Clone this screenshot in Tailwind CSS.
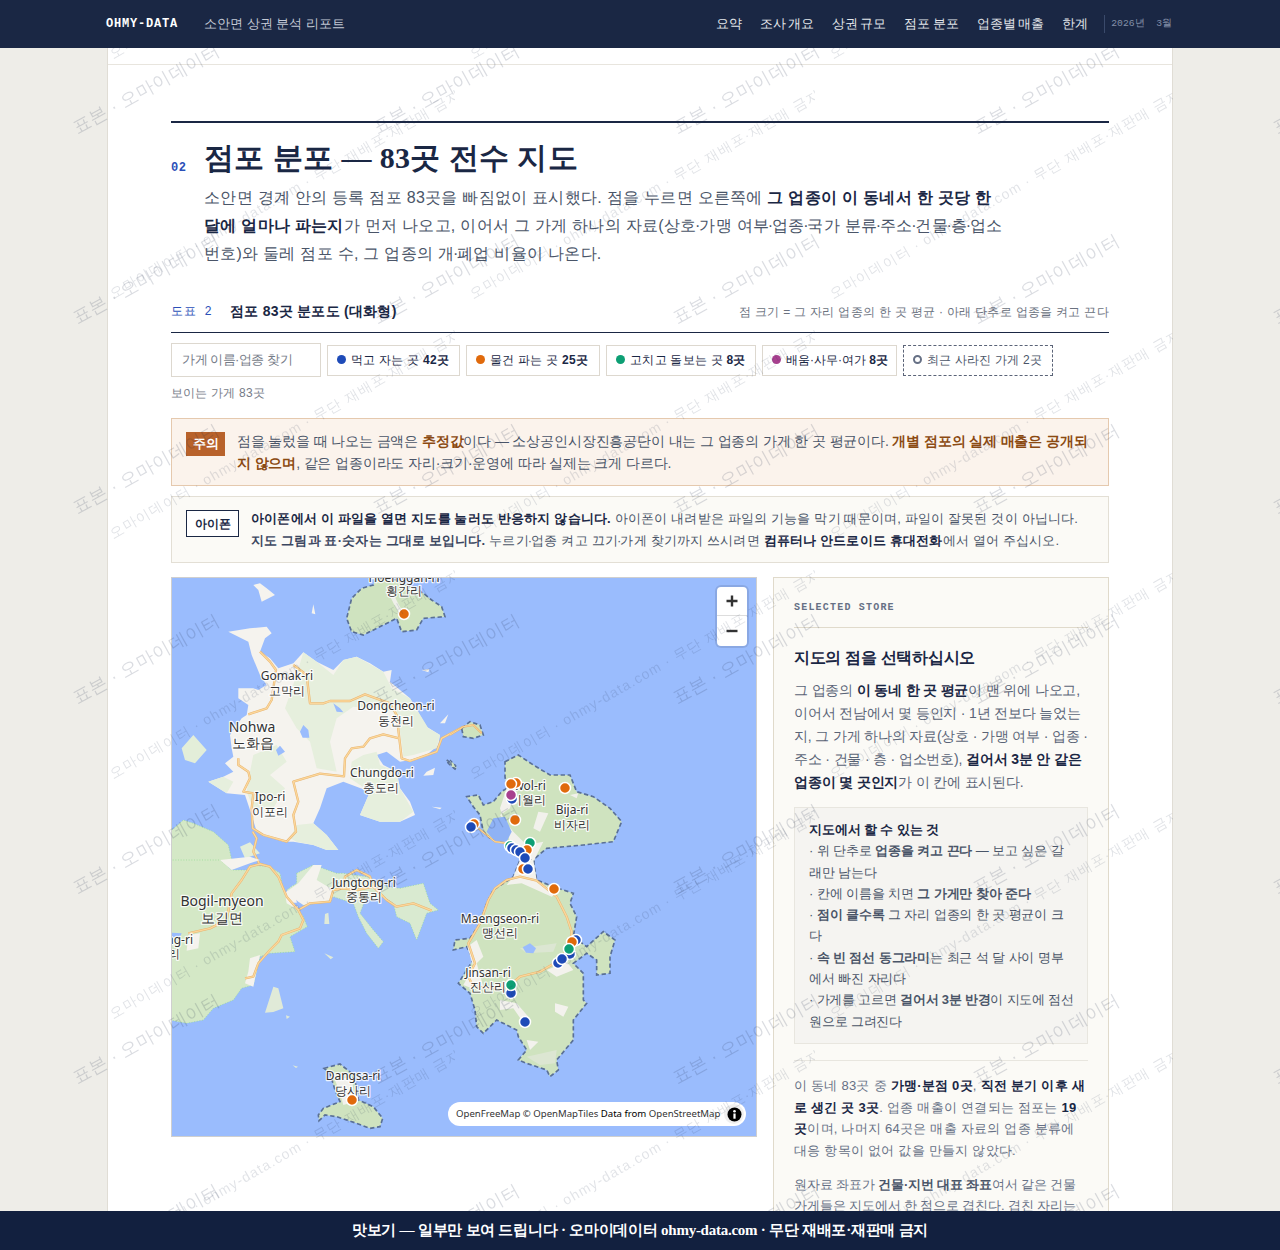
<!DOCTYPE html>
<html lang="ko">
<head>
<meta charset="UTF-8">
<title>소안면 상권 분석 리포트</title>
<script src="https://cdn.jsdelivr.net/npm/@tailwindcss/browser@4"></script>
</head>
<body class="bg-[#eeede8] text-[#1a2744] font-['Liberation_Sans',sans-serif]">
<div class="h-[1250px] overflow-hidden">

  <!-- Header -->
  <header class="relative z-20 h-12 bg-[#1a2744]">
    <div class="mx-auto w-[1068px] h-full flex items-center">
      <span class="w-[98px] font-['Liberation_Mono',monospace] font-bold text-[12px] tracking-[0.8px] text-white">OHMY-DATA</span>
      <span class="text-[13px] text-[#c4cad6]">소안면 상권 분석 리포트</span>
      <nav class="ml-auto flex items-center gap-[18px] text-[13px] [word-spacing:-1.2px] text-[#e4e7ec]">
        <span>요약</span><span>조사 개요</span><span>상권 규모</span><span>점포 분포</span><span>업종별 매출</span><span>한계</span>
      </nav>
      <span class="ml-[16px] mr-[2px] pl-[6px] border-l border-[#3a4a6b] font-['Liberation_Mono',monospace] text-[9.7px] leading-[18px] text-[#8490a8] whitespace-pre">2026년  3월</span>
    </div>
  </header>

  <!-- Main -->
  <main class="mx-auto w-[1066px] min-h-[1202px] bg-white border-x border-[#e0ddd5]">
    <div class="h-[17px] border-b border-[#e8e5de]"></div>
    <section class="px-[63px] pt-[56px]">
      <div class="border-t-2 border-[#1a2744] flex pt-[13px]">
        <span class="w-[33px] pt-[23px] font-['Liberation_Mono',monospace] font-bold text-[12px] tracking-[0.5px] text-[#2b4fb8]">02</span>
        <div>
          <h2 class="font-['Liberation_Serif',serif] font-bold text-[30px] leading-[44px] tracking-[0.4px]">점포 분포 — 83곳 전수 지도</h2>
          <p class="mt-[4px] w-[802px] text-[16px] tracking-[0.28px] leading-[28px] text-[#4a5568]">소안면 경계 안의 등록 점포 83곳을 빠짐없이 표시했다. 점을 누르면 오른쪽에 <b class="text-[#1a2744]">그 업종이 이 동네서 한 곳당 한 달에 얼마나 파는지</b>가 먼저 나오고, 이어서 그 가게 하나의 자료(상호<i class="not-italic mx-[-1.4px]">·</i>가맹 여부<i class="not-italic mx-[-1.4px]">·</i>업종<i class="not-italic mx-[-1.4px]">·</i>국가 분류<i class="not-italic mx-[-1.4px]">·</i>주소<i class="not-italic mx-[-1.4px]">·</i>건물<i class="not-italic mx-[-1.4px]">·</i>층<i class="not-italic mx-[-1.4px]">·</i>업소번호)와 둘레 점포 수, 그 업종의 개<i class="not-italic mx-[-1.4px]">·</i>폐업 비율이 나온다.</p>
        </div>
      </div>

      <!-- Figure heading -->
      <div class="mt-[29px] h-[36px] flex items-center border-b border-[#1a2744] pb-[6px]">
        <span class="w-[59px] font-['Liberation_Mono',monospace] text-[12px] tracking-[0.8px] text-[#2b4fb8] whitespace-pre">도표 2</span>
        <b class="text-[14px] tracking-[0.25px]">점포 83곳 분포도 (대화형)</b>
        <span class="ml-auto text-[12px] tracking-[0.3px] text-[#6b7280]">점 크기 = 그 자리 업종의 한 곳 평균 · 아래 단추로 업종을 켜고 끈다</span>
      </div>

      <!-- Filters -->
      <div class="mt-[10px] flex items-center gap-[6px]">
        <div class="w-[150px] h-[34px] border border-[#ddd8cf] px-[10px] flex items-center text-[13px] tracking-[-0.5px] text-[#757b87]">가게 이름·업종 찾기</div>
        <div class="w-[133px] h-[31px] border border-[#ddd8cf] flex items-center pl-[9px] pb-[1px] gap-[5px] text-[12px] tracking-[0.25px]"><i class="w-[9px] h-[9px] rounded-full bg-[#1e4bb8]"></i><span>먹고 자는 곳 <b>42곳</b></span></div>
        <div class="w-[134px] h-[31px] border border-[#ddd8cf] flex items-center pl-[9px] pb-[1px] gap-[5px] text-[12px] tracking-[0.25px]"><i class="w-[9px] h-[9px] rounded-full bg-[#e06a0c]"></i><span>물건 파는 곳 <b>25곳</b></span></div>
        <div class="w-[150px] h-[31px] border border-[#ddd8cf] flex items-center pl-[9px] pb-[1px] gap-[5px] text-[12px] tracking-[0.25px]"><i class="w-[9px] h-[9px] rounded-full bg-[#0d9f74]"></i><span>고치고 돌보는 곳 <b>8곳</b></span></div>
        <div class="w-[135px] h-[31px] border border-[#ddd8cf] flex items-center pl-[9px] pb-[1px] gap-[5px] text-[12px]"><i class="w-[9px] h-[9px] rounded-full bg-[#a8408f]"></i><span>배움·사무·여가 <b>8곳</b></span></div>
        <div class="w-[150px] h-[31px] border border-dashed border-[#5b6478] flex items-center pl-[9px] pb-[1px] gap-[5px] text-[12px] tracking-[0.2px] text-[#4a5568]"><i class="w-[9px] h-[9px] rounded-full border-2 border-[#667085]"></i><span>최근 사라진 가게 2곳</span></div>
      </div>
      <p class="mt-[8px] text-[12px] tracking-[0.2px] leading-[17px] text-[#757b87]">보이는 가게 83곳</p>

      <!-- Notices -->
      <div class="mt-[16px] h-[68px] bg-[#fbf3ec] border border-[#e5c9ae] flex pl-[14px] pt-[11px] gap-[12px]">
        <span class="shrink-0 w-[39px] h-[24px] mt-[2px] bg-[#b8622b] text-white font-bold text-[13px] flex items-center justify-center">주의</span>
        <p class="text-[14px] tracking-[-0.15px] leading-[22px] text-[#4a5568] pr-[20px]">점을 눌렀을 때 나오는 금액은 <b class="text-[#8b4a12]">추정값</b>이다 — 소상공인시장진흥공단이 내는 그 업종의 가게 한 곳 평균이다. <b class="text-[#8b4a12]">개별 점포의 실제 매출은 공개되지 않으며</b>, 같은 업종이라도 자리·크기·운영에 따라 실제는 크게 다르다.</p>
      </div>
      <div class="mt-[10px] h-[67px] bg-[#fbfaf6] border border-[#e3dfd5] flex pl-[14px] pt-[11px] gap-[12px]">
        <span class="shrink-0 w-[53px] h-[27px] mt-[2px] bg-white border border-[#1a2744] font-bold text-[12px] flex items-center justify-center">아이폰</span>
        <p class="text-[13px] tracking-[0.18px] leading-[22px] text-[#4a5568] pr-[20px]"><b class="text-[#1a2744]">아이폰에서 이 파일을 열면 지도를 눌러도 반응하지 않습니다.</b> 아이폰이 내려받은 파일의 기능을 막기 때문이며, 파일이 잘못된 것이 아닙니다. <b class="text-[#3b4660]">지도 그림과 표·숫자는 그대로 보입니다.</b> 누르기<i class="not-italic mx-[-1px]">·</i>업종 켜고 끄기<i class="not-italic mx-[-1px]">·</i>가게 찾기까지 쓰시려면 <b class="text-[#1a2744]">컴퓨터나 안드로이드 휴대전화</b>에서 열어 주십시오.</p>
      </div>

      <!-- Map and side panel -->
      <div class="mt-[14px] flex gap-[16px] items-start">
        <div class="relative w-[586px] h-[560px] border border-[#cfcfcf] bg-[#9abcfd] overflow-hidden shrink-0">
          <svg class="block" width="584" height="558" viewBox="172 578 584 558" font-family="'Noto Sans',sans-serif">
            <!-- north half, traced on a 3x grid -->
            <g transform="translate(170,575) scale(0.33333)">
              <path fill="#f5f3ee" d="M175 170 240 160 290 155 305 175 285 190 270 230 300 250 325 280 370 265 400 232 440 260 490 285 520 255 560 245 600 265 640 290 665 285 660 320 690 345 720 370 770 455 810 480 805 510 770 540 720 555 690 560 650 530 620 540 640 570 680 590 690 640 720 680 735 720 690 740 630 740 570 720 600 650 520 620 470 640 450 700 430 745 470 780 505 825 470 825 430 810 370 800 340 800 260 770 245 720 225 660 170 655 115 620 160 605 190 590 165 565 190 545 185 520 180 480 215 430 230 420 235 390 205 370 205 340 250 340 265 345 290 330 270 300 245 240 235 200Z"/>
              <path fill="#e6efdd" d="M400 232 440 260 490 300 520 255 560 245 640 290 665 340 720 370 775 460 810 480 800 520 730 540 700 545 690 470 670 410 600 400 550 395 500 430 480 500 500 590 440 580 420 500 380 460 345 400 380 300Z"/>
              <path fill="#e6efdd" d="M250 540 320 510 350 560 300 600 345 640 310 700 250 700 230 650 240 590Z"/>
              <path fill="#e6efdd" d="M580 540 620 530 630 570 680 590 690 640 730 710 690 740 630 740 570 720 600 650 540 610 545 560Z"/>
              <path fill="#e6efdd" d="M380 750 430 745 470 780 505 825 470 825 430 810 380 800 360 790Z"/>
              <path fill="#e6efdd" d="M115 620 160 605 190 620 170 655Z"/>
              <path fill="#9abcfd" d="M400 450 415 465 418 488 398 488 390 470ZM330 512 345 530 325 542 318 525ZM490 385 510 400 520 412 500 410Z"/>
              <path fill="#f5f3ee" d="M250 30 270 25 290 40 315 60 275 80 265 45ZM430 88 436 118 425 115ZM770 590 795 578 790 600 760 602ZM785 695 815 698 810 703ZM755 285 778 282 775 292ZM810 445 835 418 825 445Z"/>
              <path fill="#e3eed9" d="M35 520 70 480 110 525 75 565 45 555ZM210 815 240 802 270 835 225 850Z"/>
              <path fill="none" stroke="#e9b56f" stroke-width="7" stroke-linejoin="round" d="M270 230 300 260 318 285 305 375 290 400 235 418M370 270 410 300 420 385 460 385 480 378 540 378 585 358 660 385 680 420 688 490 695 550 720 558 800 530 815 490 880 455M688 490 640 478 600 490 580 515 545 520 525 550 522 604 450 596 370 620 385 680 370 720 378 770 350 800 280 780 248 760 245 700 250 655 220 650 240 610 235 590 205 570 205 550M248 770 260 790 250 830 270 870"/>
              <path fill="none" stroke="#fbd79c" stroke-width="4" stroke-linejoin="round" d="M270 230 300 260 318 285 305 375 290 400 235 418M370 270 410 300 420 385 460 385 480 378 540 378 585 358 660 385 680 420 688 490 695 550 720 558 800 530 815 490 880 455M688 490 640 478 600 490 580 515 545 520 525 550 522 604 450 596 370 620 385 680 370 720 378 770 350 800 280 780 248 760 245 700 250 655 220 650 240 610 235 590 205 570 205 550M248 770 260 790 250 830 270 870"/>
              <path fill="#cfe3bf" stroke="#5a7096" stroke-width="5" stroke-dasharray="13 8" d="M620 10 610 30 575 40 545 70 530 130 545 170 580 180 640 150 680 130 695 170 740 165 760 130 825 125 815 95 785 75 760 55 720 35 680 15 640 10Z"/>
              <path fill="none" stroke="#eff0ea" stroke-width="12" d="M655 40 680 90 700 125"/>
              <path fill="#cfe3bf" stroke="#5a7096" stroke-width="5" stroke-dasharray="13 8" d="M830 555 860 575 855 582 835 565Z"/>
              <path fill="#d4e8c6" stroke="#8fdc8f" stroke-width="2" stroke-dasharray="3 5" d="M0 770 40 735 70 745 130 770 175 810 190 875 0 875Z"/>
            </g>
            <!-- east islands -->
            <g transform="translate(450,575) scale(0.33333)">
              <path fill="#cfe3bf" stroke="#5a7096" stroke-width="5" stroke-dasharray="13 8" d="M165 560 205 540 250 570 300 600 360 600 380 650 430 665 480 700 515 740 490 800 400 810 290 820 255 850 245 880 210 880 215 840 190 810 150 800 120 790 100 770 90 720 70 695 50 665 85 660 100 690 130 680 155 650 170 640 165 605Z"/>
              <path fill="#f2f1ec" d="M170 640 190 660 180 700 150 720 190 770 230 810 280 800 255 850 245 880 210 880 215 840 180 800 150 700Z"/>
              <path fill="#f2f1ec" d="M265 710 295 715 270 770 250 760ZM360 660 385 655 380 670Z"/>
              <path fill="#8fb2f5" d="M130 730 165 725 185 770 170 800 135 800 110 770Z"/>
              <path fill="#cfe3bf" stroke="#5a7096" stroke-width="5" stroke-dasharray="13 8" d="M35 460 60 440 90 450 100 480 70 490 40 485Z"/>
              <path fill="none" stroke="#e9b56f" stroke-width="6" d="M0 480 40 455 70 450 95 475M85 760 135 800 170 805"/>
              <path fill="none" stroke="#fbd79c" stroke-width="3" d="M0 480 40 455 70 450 95 475M85 760 135 800 170 805"/>
              <path fill="#cfe3bf" stroke="#5a7096" stroke-width="4" stroke-dasharray="10 8" d="M0 555 15 570 20 582 5 575Z"/>
            </g>
            <!-- Bogil, Jungtong, Dangsa -->
            <g transform="translate(170,860) scale(0.33333)">
              <path fill="#d4e8c6" stroke="#8fdc8f" stroke-width="2" stroke-dasharray="3 5" d="M0 0 150 0 185 30 230 30 240 15 300 20 330 40 340 90 370 130 400 170 412 200 360 230 375 275 300 280 270 290 250 375 215 385 190 420 130 445 100 480 50 490 0 480Z"/>
              <path fill="#f5f3ee" d="M150 0 185 30 240 10 270 0 240 -10ZM345 100 370 75 385 150 350 130ZM240 295 270 285 250 380 225 370 235 335ZM55 225 90 220 85 265 50 272Z"/>
              <path fill="#9abcfd" d="M0 218 35 220 30 232 0 232ZM368 128 388 128 380 142Z"/>
              <path fill="#d9ead0" stroke="#8fdc8f" stroke-width="2" stroke-dasharray="3 5" d="M380 40 430 15 500 40 520 40 590 50 650 80 690 85 760 70 780 130 805 150 770 160 740 240 720 190 680 170 670 130 640 110 585 120 570 160 610 210 640 245 625 265 590 220 565 170 550 130 490 110 470 125 400 135 385 120 350 90 380 70Z"/>
              <path fill="#f5f3ee" d="M350 95 385 70 430 15 455 15 440 60 490 90 485 120 400 135 385 125Z"/>
              <path fill="none" stroke="#e9b56f" stroke-width="7" stroke-linejoin="round" d="M225 355 250 350 265 310 300 270 325 245 335 225 390 205 400 180 385 150 350 110 325 50 300 20 270 12 240 20 215 60 185 100 170 180 120 205 55 220M385 150 420 130 480 125 490 90 520 85 560 90 610 80 650 120 680 140 730 130 785 152M520 85 525 50 560 30 600 50 610 80"/>
              <path fill="none" stroke="#fbd79c" stroke-width="4" stroke-linejoin="round" d="M225 355 250 350 265 310 300 270 325 245 335 225 390 205 400 180 385 150 350 110 325 50 300 20 270 12 240 20 215 60 185 100 170 180 120 205 55 220M385 150 420 130 480 125 490 90 520 85 560 90 610 80 650 120 680 140 730 130 785 152M520 85 525 50 560 30 600 50 610 80"/>
              <path fill="#e0ead8" d="M285 458 310 380 325 385 340 445 310 456ZM465 162 475 158 478 192 463 192ZM463 280 490 292 482 298ZM348 466 360 470 350 477ZM490 382 500 388ZM368 616 384 620 378 624Z"/>
              <path fill="#cfe3bf" stroke="#5a7096" stroke-width="5" stroke-dasharray="13 8" d="M462 625 510 612 545 640 560 680 565 720 610 740 638 775 630 800 600 805 560 790 500 770 465 765 447 782 445 765 460 745 510 725 495 690 480 640Z"/>
              <path fill="#f2f1ec" d="M495 660 545 650 555 725 520 735 510 700Z"/>
            </g>
            <!-- Maengseon -->
            <g transform="translate(440,860) scale(0.33333)">
              <path fill="#cfe3bf" stroke="#5a7096" stroke-width="5" stroke-dasharray="13 8" d="M240 0 280 0 290 60 340 80 400 100 390 130 410 170 400 230 440 260 490 215 525 240 510 290 510 340 470 345 470 300 440 280 400 310 430 340 430 420 440 430 400 480 400 540 350 600 355 630 330 650 320 630 260 610 235 600 260 570 235 530 230 510 170 480 130 520 110 500 105 450 90 400 55 370 80 330 100 300 80 260 40 270 45 240 90 235 120 190 140 130 160 90 220 50Z"/>
              <path fill="#f3f2ed" d="M240 0 280 0 290 60 350 100 335 110 290 90 245 70 200 75 220 50ZM345 430 385 440 370 470 345 455ZM180 420 230 430 265 470 255 495 220 445 180 450ZM320 330 380 305 400 330 350 350ZM260 540 295 545 270 570Z"/>
              <path fill="#dce6d2" d="M260 590 350 570 345 610 300 615ZM240 265 350 250 340 275 260 280Z"/>
              <path fill="#f3f2ed" d="M82 260 110 240 130 290 110 310 130 380 95 385 70 375 100 320Z"/>
              <path fill="#9abcfd" d="M248 262 270 250 288 265 280 280 258 278Z"/>
              <path fill="none" stroke="#e9b56f" stroke-width="7" stroke-linejoin="round" d="M145 120 165 85 200 60 240 50 290 62 350 110 380 170 395 215 390 250 360 300 300 335 240 350 215 372 170 385 100 380 85 350 105 310 85 250 120 190 145 120"/>
              <path fill="none" stroke="#fbd79c" stroke-width="4" stroke-linejoin="round" d="M145 120 165 85 200 60 240 50 290 62 350 110 380 170 395 215 390 250 360 300 300 335 240 350 215 372 170 385 100 380 85 350 105 310 85 250 120 190 145 120"/>
            </g>
            <!-- place names -->
            <g fill="#333" stroke="#fff" stroke-opacity="0.85" stroke-width="2.5" paint-order="stroke" stroke-linejoin="round" text-anchor="middle" font-size="12">
              <text x="404" y="582">Hoenggan-ri</text><text x="404" y="595">횡간리</text>
              <text x="287" y="680">Gomak-ri</text><text x="287" y="695">고막리</text>
              <text x="396" y="710">Dongcheon-ri</text><text x="396" y="725">동천리</text>
              <text x="382" y="777">Chungdo-ri</text><text x="381" y="792">충도리</text>
              <text x="270" y="801">Ipo-ri</text><text x="270" y="816">이포리</text>
              <text x="528" y="790">Iwol-ri</text><text x="528" y="804">이월리</text>
              <text x="572" y="814">Bija-ri</text><text x="572" y="829">비자리</text>
              <text x="364" y="887">Jungtong-ri</text><text x="364" y="901">중통리</text>
              <text x="500" y="923">Maengseon-ri</text><text x="500" y="937">맹선리</text>
              <text x="488" y="977">Jinsan-ri</text><text x="488" y="991">진산리</text>
              <text x="353" y="1080">Dangsa-ri</text><text x="353" y="1095">당사리</text>
              <text x="193" y="944" text-anchor="end">Bureong-ri</text><text x="180" y="958" text-anchor="end">부황리</text>
              <text x="252" y="732" font-size="14">Nohwa</text><text x="253" y="748" font-size="14">노화읍</text>
              <text x="222" y="906" font-size="14">Bogil-myeon</text><text x="222" y="923" font-size="14">보길면</text>
            </g>
            <!-- store dots -->
            <g stroke="#fff" stroke-width="1.5">
              <circle cx="404" cy="614" r="5.5" fill="#e06a0c"/>
              <circle cx="516" cy="783" r="5.5" fill="#e06a0c"/><circle cx="511" cy="784" r="5.5" fill="#e06a0c"/>
              <circle cx="565" cy="788" r="5.5" fill="#e06a0c"/>
              <circle cx="512" cy="799" r="5.5" fill="#1e4bb8"/><circle cx="511" cy="795" r="5.5" fill="#a8408f"/>
              <circle cx="515" cy="820" r="5.5" fill="#e06a0c"/>
              <circle cx="474" cy="824" r="5.5" fill="#e06a0c"/><circle cx="471" cy="827" r="5.5" fill="#1e4bb8"/>
              <circle cx="530" cy="843" r="5.5" fill="#0d9f74"/><circle cx="510" cy="846" r="5.5" fill="#0d9f74"/>
              <circle cx="527" cy="850" r="5.5" fill="#e06a0c"/>
              <circle cx="512" cy="848" r="5.5" fill="#1e4bb8"/><circle cx="516" cy="850" r="5.5" fill="#1e4bb8"/><circle cx="520" cy="852" r="5.5" fill="#1e4bb8"/>
              <circle cx="525" cy="858" r="5.5" fill="#1e4bb8"/>
              <circle cx="523" cy="869" r="5.5" fill="#e06a0c"/><circle cx="528" cy="869" r="5.5" fill="#1e4bb8"/>
              <circle cx="554" cy="889" r="5.5" fill="#e06a0c"/>
              <circle cx="576" cy="940" r="5.5" fill="#1e4bb8"/><circle cx="572" cy="942" r="5.5" fill="#e06a0c"/>
              <circle cx="570" cy="954" r="5.5" fill="#1e4bb8"/><circle cx="569" cy="949" r="5.5" fill="#0d9f74"/>
              <circle cx="558" cy="963" r="5.5" fill="#1e4bb8"/><circle cx="562" cy="959" r="5.5" fill="#1e4bb8"/>
              <circle cx="511" cy="993" r="5.5" fill="#1e4bb8"/><circle cx="511" cy="985" r="5.5" fill="#0d9f74"/>
              <circle cx="525" cy="1022" r="5.5" fill="#1e4bb8"/>
              <circle cx="352" cy="1100" r="5.5" fill="#e06a0c"/>
            </g>
          </svg>
          <!-- zoom control -->
          <div class="absolute right-[9px] top-[9px] w-[30px] h-[59px] rounded-[4px] bg-white shadow-[0_0_0_2px_rgba(0,0,0,0.1)] flex flex-col">
            <div class="h-[29px] border-b border-[#ddd] flex items-center justify-center">
              <svg width="12" height="12" viewBox="0 0 12 12"><path d="M6 0.5v11M0.5 6h11" stroke="#333" stroke-width="2.4"/></svg>
            </div>
            <div class="flex-1 flex items-center justify-center">
              <svg width="12" height="12" viewBox="0 0 12 12"><path d="M0.5 6h11" stroke="#333" stroke-width="2.4"/></svg>
            </div>
          </div>
          <!-- attribution -->
          <div class="absolute right-[10px] bottom-[10px] w-[298px] h-[24px] rounded-full bg-white flex items-center pl-[8px] font-['Noto_Sans','Liberation_Sans',sans-serif] text-[9.6px] text-[#333] whitespace-pre">
            <span>OpenFreeMap © OpenMapTiles <span class="text-black">Data from</span> OpenStreetMap</span>
            <span class="absolute right-[2px] top-[2px] w-[20px] h-[20px] rounded-full bg-[#f0f0f0] flex items-center justify-center">
              <svg width="15" height="15" viewBox="0 0 15 15"><circle cx="7.5" cy="7.5" r="7" fill="#000"/><rect x="6.4" y="6.5" width="2.2" height="5.2" fill="#fff"/><circle cx="7.5" cy="4.2" r="1.3" fill="#fff"/></svg>
            </span>
          </div>
        </div>

        <!-- Selected store panel -->
        <aside class="w-[336px] h-[700px] bg-[#fbfaf6] border border-[#e0dacb] px-[20px] pt-[23px]">
          <div class="pb-[13px] border-b border-[#e0dacb] font-['Liberation_Mono',monospace] font-bold text-[10px] leading-[13px] tracking-[1.2px] text-[#667085]">SELECTED STORE</div>
          <h3 class="mt-[18px] font-bold text-[16px] tracking-[-0.3px] leading-[24px]">지도의 점을 선택하십시오</h3>
          <p class="mt-[9px] text-[14px] tracking-[-0.18px] leading-[23px] text-[#5a6476]">그 업종의 <b class="text-[#1a2744]">이 동네 한 곳 평균</b>이 맨 위에 나오고, 이어서 전남에서 몇 등인지 · 1년 전보다 늘었는지, 그 가게 하나의 자료(상호 · 가맹 여부 · 업종 · 주소 · 건물 · 층 · 업소번호), <b class="text-[#1a2744]">걸어서 3분 안 같은 업종이 몇 곳인지</b>가 이 칸에 표시된다.</p>
          <div class="mt-[13px] bg-[#f5f4f1] border border-[#e8e6df] pl-[14px] pr-[12px] pt-[11px] pb-[11px] text-[13px] tracking-[-0.12px] leading-[21.3px] text-[#4a5568]">
            <b class="text-[#1a2744]">지도에서 할 수 있는 것</b><br>
            · 위 단추로 <b>업종을 켜고 끈다</b> — 보고 싶은 갈래만 남는다<br>
            · 칸에 이름을 치면 <b>그 가게만 찾아 준다</b><br>
            · <b>점이 클수록</b> 그 자리 업종의 한 곳 평균이 크다<br>
            · <b>속 빈 점선 동그라미</b>는 최근 석 달 사이 명부에서 빠진 자리다<br>
            <span class="tracking-[-0.22px]">· 가게를 고르면 <b>걸어서 3분 반경</b>이 지도에 점선 원으로 그려진다</span>
          </div>
          <div class="mt-[16px] border-t border-[#e8e6df] pt-[14px] text-[13px] tracking-[0.25px] leading-[21.7px] text-[#667085]">
            이 동네 83곳 중 <b class="text-[#1a2744]">가맹·분점 0곳</b>, <b class="text-[#1a2744]">직전 분기 이후 새로 생긴 곳 3곳</b>. 업종 매출이 연결되는 점포는 <b class="text-[#1a2744]">19곳</b>이며, 나머지 64곳은 매출 자료의 업종 분류에 대응 항목이 없어 값을 만들지 않았다.
          </div>
          <p class="mt-[12px] text-[13px] [word-spacing:-0.6px] leading-[21.7px] text-[#667085]">원자료 좌표가 <b class="text-[#4a5568]">건물·지번 대표 좌표</b>여서 같은 건물 가게들은 지도에서 한 점으로 겹친다. 겹친 자리는 확대해서 본다.</p>
        </aside>
      </div>
    </section>
  </main>
</div>

<!-- Watermark -->
<svg class="fixed inset-0 z-10 pointer-events-none" width="1280" height="1250" font-family="'Liberation Sans',sans-serif">
  <defs>
    <pattern id="wmA" patternUnits="userSpaceOnUse" x="62" y="32" width="300" height="190">
      <text transform="translate(15,102) rotate(-29)" font-size="18" letter-spacing="0.4" fill="#1a2744" fill-opacity="0.16">표본 · 오마이데이터</text>
    </pattern>
    <pattern id="wmB" patternUnits="userSpaceOnUse" x="95" y="90" width="360" height="240">
      <text transform="translate(18,209) rotate(-30)" font-size="14" letter-spacing="1.2" fill="#1a2744" fill-opacity="0.13">오마이데이터 · ohmy-data.com · 무단 재배포·재판매 금지</text>
    </pattern>
  </defs>
  <rect width="1280" height="1250" fill="url(#wmA)"/>
  <rect x="107" width="1066" height="1250" fill="url(#wmB)"/>
</svg>

<!-- Preview bar -->
<div class="fixed left-0 right-0 bottom-0 z-20 h-[39px] bg-[#12203f] flex items-center justify-center font-['Liberation_Serif',serif] font-bold text-[15px] tracking-[-0.26px] text-white">맛보기 — 일부만 보여 드립니다 · 오마이데이터 ohmy-data.com · 무단 재배포·재판매 금지</div>
</body>
</html>
